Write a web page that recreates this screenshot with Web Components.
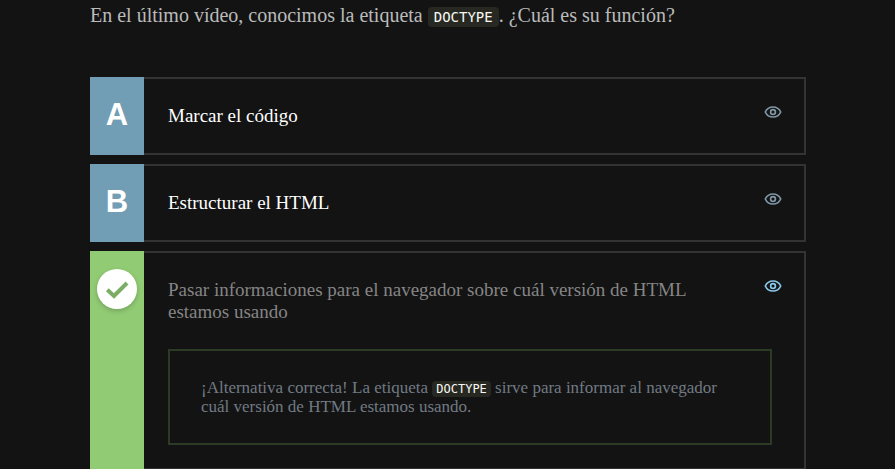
<!DOCTYPE html>
<html lang="es">
<head>
<meta charset="utf-8">
<title>Pregunta: DOCTYPE</title>
<style>
  body { margin: 0; background: #131313; font-family: "Liberation Serif", serif; }
</style>
</head>
<body>
<quiz-question>
  <span slot="prompt">En el último vídeo, conocimos la etiqueta <code-chip>DOCTYPE</code-chip>. ¿Cuál es su función?</span>
  <quiz-option letter="A">Marcar el código</quiz-option>
  <quiz-option letter="B">Estructurar el HTML</quiz-option>
  <quiz-option letter="C" correct>Pasar informaciones para el navegador sobre cuál versión de HTML estamos usando
    <answer-note slot="note">¡Alternativa correcta! La etiqueta <code-chip small>DOCTYPE</code-chip> sirve para informar al navegador cuál versión de HTML estamos usando.</answer-note>
  </quiz-option>
</quiz-question>

<script>
const define = (name, html, setup) => customElements.define(name, class extends HTMLElement {
  constructor() {
    super();
    this.attachShadow({ mode: 'open' }).innerHTML = html;
  }
  connectedCallback() { if (setup) setup(this); }
});

define('code-chip', `
  <style>
    :host { display: inline; padding: 2px 6px; border-radius: 4px; background: #272822; color: #f8f8f2;
            font: 14px/16px "DejaVu Sans Mono", monospace; }
    :host([small]) { padding: 1px 4px; font-size: 12px; }
  </style><slot></slot>`);

define('answer-note', `
  <style>
    :host { display: block; border: 2px solid #2d3a26; padding: 27px 31px; color: #717a83; font-size: 17px; line-height: 19px; }
  </style><slot></slot>`);

define('quiz-question', `
  <style>
    :host { display: block; padding: 4px 89px 0 90px; }
    p { margin: 0 0 50px; color: #bbb; font-size: 20px; line-height: 23px; }
    .options { display: flex; flex-direction: column; gap: 9px; }
  </style>
  <p id="prompt"><slot name="prompt"></slot></p>
  <div class="options" role="group" aria-labelledby="prompt"><slot></slot></div>`);

define('quiz-option', `
  <style>
    :host { display: grid; grid-template-columns: 54px 1fr; color: #fff; font-size: 19px; line-height: 22px; }
    :host([correct]) { color: #858585; }
    button { margin: 0; padding: 0; border: 0; background: none; cursor: pointer; }
    .mark { display: flex; justify-content: center; align-items: center; padding-bottom: 2px; background: #719db5; color: #fff;
            font: bold 31px/32px "Liberation Sans", sans-serif; }
    :host([correct]) .mark { align-items: flex-start; padding: 18px 0 0; background: #91cb74; }
    .check { display: none; width: 40px; height: 40px; border-radius: 50%; background: #fff; box-shadow: 0 2px 5px #0003; }
    :host([correct]) .check { display: block; }
    :host([correct]) .letter { display: none; }
    .body { display: grid; grid-template-columns: 1fr 24px; column-gap: 24px; align-items: start;
            border: 2px solid #333; border-left: 0; padding: 0 19px 0 24px; }
    .text { padding: 26px 0; }
    .eye { width: 24px; height: 24px; margin-top: 21px; color: #7f98a6; }
    :host([correct]) .eye { color: #88c8ec; }
    .eye svg { display: block; }
    ::slotted(answer-note) { grid-column: 1 / -1; margin: 0 13px 23px 0; }
  </style>
  <button class="mark" type="button" aria-labelledby="text">
    <span class="letter"></span>
    <svg class="check" viewBox="0 0 40 40" fill="none" stroke="#7bad64" stroke-width="4"><path d="M10.3 20.7 17 27 30 14"/></svg>
  </button>
  <div class="body">
    <div class="text" id="text"><slot></slot></div>
    <button class="eye" type="button" aria-label="Ver opinión">
      <svg width="24" height="24" viewBox="0 0 24 24" fill="none" stroke="currentColor" stroke-width="1.700">
        <path d="M4.300 12C5.700 8.900 8.500 7 12 7S18.300 8.900 19.700 12C18.300 15.100 15.500 17 12 17S5.700 15.100 4.300 12Z"/>
        <circle cx="12" cy="12" r="2.400"/>
      </svg>
    </button>
    <slot name="note"></slot>
  </div>`, el => { el.shadowRoot.querySelector('.letter').textContent = el.getAttribute('letter'); });
</script>
</body>
</html>
